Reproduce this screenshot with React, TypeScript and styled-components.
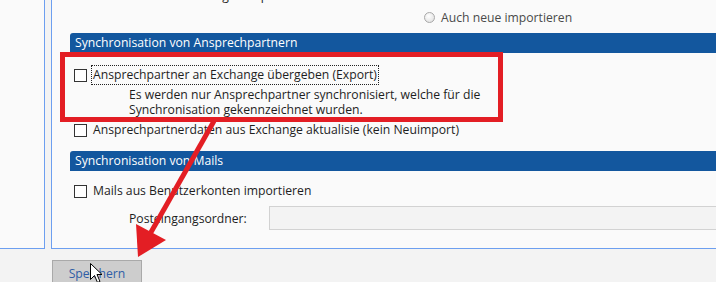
import React from "react";
import styled, { createGlobalStyle } from "styled-components";

const Global = createGlobalStyle`
  html, body { margin: 0; padding: 0; }
  body {
    background: #f3f3f3;
    font-family: "Open Sans", "Noto Sans", sans-serif;
    font-size: 12.2px;
    color: #1e1e1e;
  }
`;

const Page = styled.div`
  position: relative;
  width: 716px;
  height: 282px;
  overflow: hidden;
  background: #f3f3f3;
`;

const Panels = styled.div`
  display: flex;
  gap: 6px;
  height: 249px;
`;

const SidePanel = styled.div`
  width: 44px;
  background: #fafafa;
  border-right: 1px solid #6d9ff0;
  border-bottom: 1px solid #6d9ff0;
`;

const MainPanel = styled.div`
  flex: 1;
  margin-right: -10px;
  background: #fafafa;
  border-left: 1px solid #6d9ff0;
  border-bottom: 1px solid #6d9ff0;
  padding-left: 18px;
  display: flex;
  flex-direction: column;
`;

const ClippedLine = styled.div`
  height: 4px;
  overflow: hidden;
  padding-left: 78px;
  white-space: nowrap;
`;

const ClippedText = styled.div`
  margin-top: -12px;
  line-height: 16px;
`;

const RadioRow = styled.div`
  margin-top: 4px;
  height: 18px;
  padding-left: 354px;
  display: flex;
  align-items: center;
  gap: 6px;
  color: #4a4a4a;
`;

const Radio = styled.span`
  width: 9px;
  height: 9px;
  border-radius: 50%;
  border: 1px solid #a8a8a8;
  background: radial-gradient(circle at 40% 35%, #ffffff 0%, #e6e6e6 70%, #d4d4d4 100%);
`;

const Header = styled.div<{ $top: number }>`
  margin-top: ${(p) => p.$top}px;
  height: 20px;
  line-height: 20px;
  background: #13579e;
  color: #ffffff;
  padding-left: 5px;
  border-top-left-radius: 3px;
  white-space: nowrap;
`;

const CheckRow = styled.div<{ $top: number }>`
  margin-top: ${(p) => p.$top}px;
  height: 20px;
  padding-left: 4px;
  display: flex;
  align-items: center;
  gap: 4px;
  white-space: nowrap;
`;

const Box = styled.span`
  width: 11px;
  height: 11px;
  border: 1px solid #333333;
  background: #ffffff;
  flex: none;
`;

const Label = styled.span<{ $focus?: boolean }>`
  padding: 0 1px;
  line-height: 18px;
  border: 1px dotted ${(p) => (p.$focus ? "#222" : "transparent")};
`;

const Description = styled.div`
  margin-top: 2px;
  padding-left: 59px;
  line-height: 15px;
`;

const FieldRow = styled.div`
  margin-top: 5px;
  display: grid;
  grid-template-columns: 140px 1fr;
  align-items: center;
  padding-left: 59px;
`;

const Input = styled.div`
  height: 22px;
  background: #f3f3f3;
  border: 1px solid #d2d2d2;
  border-right: none;
`;

const ButtonBar = styled.div`
  padding: 11px 0 0 52px;
`;

const Button = styled.div`
  width: 88px;
  height: 24px;
  border: 1px solid #a9a9a9;
  background: #cdcdcd;
  color: #2f5da6;
  display: flex;
  align-items: center;
  justify-content: center;
`;

const RedFrame = styled.div`
  position: absolute;
  left: 60px;
  top: 52px;
  width: 433px;
  height: 60px;
  border: 5px solid #e31e24;
  pointer-events: none;
`;

const Overlay = styled.svg`
  position: absolute;
  left: 0;
  top: 0;
  pointer-events: none;
`;

export default function App() {
  return (
    <Page>
      <Global />
      <Panels>
        <SidePanel />
        <MainPanel>
          <ClippedLine>
            <ClippedText>Nur Änderungen importieren</ClippedText>
          </ClippedLine>
          <RadioRow>
            <Radio />
            <span>Auch neue importieren</span>
          </RadioRow>
          <Header $top={7}>Synchronisation von Ansprechpartnern</Header>
          <CheckRow $top={12}>
            <Box />
            <Label $focus>Ansprechpartner an Exchange übergeben (Export)</Label>
          </CheckRow>
          <Description>
            Es werden nur Ansprechpartner synchronisiert, welche für die
            <br />
            Synchronisation gekennzeichnet wurden.
          </Description>
          <CheckRow $top={3}>
            <Box />
            <Label>Ansprechpartnerdaten aus Exchange aktualisie (kein Neuimport)</Label>
          </CheckRow>
          <Header $top={11}>Synchronisation von Mails</Header>
          <CheckRow $top={10}>
            <Box />
            <Label>Mails aus Benutzerkonten importieren</Label>
          </CheckRow>
          <FieldRow>
            <span>Posteingangsordner:</span>
            <Input />
          </FieldRow>
        </MainPanel>
      </Panels>
      <ButtonBar>
        <Button>Speichern</Button>
      </ButtonBar>
      <RedFrame />
      <Overlay width={716} height={282} viewBox="0 0 716 282">
        <line x1={214} y1={121} x2={150} y2={234} stroke="#e31e24" strokeWidth={5} />
        <polygon points="138,257 136,224 166,240" fill="#e31e24" />
      </Overlay>
      <Overlay width={716} height={282} viewBox="0 0 716 282">
        <path
          d="M90.5 263.5 L90.5 279.5 L94.5 275.5 L97.5 282.5 L100 281.5 L97 274.5 L102 274.5 Z"
          fill="#ffffff"
          stroke="#000000"
          strokeWidth={1}
        />
      </Overlay>
    </Page>
  );
}
